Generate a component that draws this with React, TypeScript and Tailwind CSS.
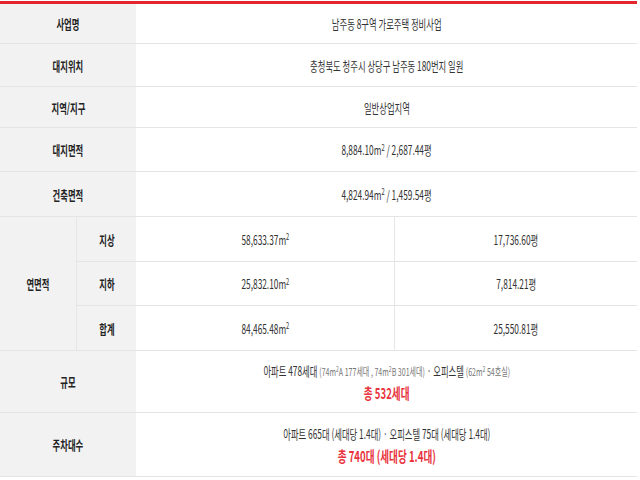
import React from 'react';

const font = { fontFamily: '"Noto Sans CJK KR", "Noto Sans", sans-serif' };

function T({ children, className = '' }: { children: React.ReactNode; className?: string }) {
  return (
    <span className={`inline-block origin-center scale-x-[0.64] whitespace-nowrap ${className}`}>
      {children}
    </span>
  );
}

function M2() {
  return (
    <>
      m<sup className="text-[9px]">2</sup>
    </>
  );
}

type RowProps = { label: string; h: string; children: React.ReactNode };

function Row({ label, h, children }: RowProps) {
  return (
    <div className={`flex border-b border-[#e4e4e4] ${h}`}>
      <div className="flex w-[136px] shrink-0 items-center justify-center bg-[#f2f2f2] text-[13px] font-bold text-[#222]">
        <T>{label}</T>
      </div>
      <div className="flex flex-1 flex-col items-center justify-center text-[13px] text-[#333]">
        {children}
      </div>
    </div>
  );
}

const subRows = [
  { label: '지상', m2: '58,633.37', py: '17,736.60', h: 'h-[45px]' },
  { label: '지하', m2: '25,832.10', py: '7,814.21', h: 'h-[44px]' },
  { label: '합계', m2: '84,465.48', py: '25,550.81', h: 'h-[45px]' },
];

export default function App() {
  return (
    <div className="h-[480px] w-[640px] bg-white pt-px leading-none" style={font}>
      <div className="w-[637px] border-t-[3px] border-[#e3262e]">
        <Row label="사업명" h="h-[40px]">
          <T>남주동 8구역 가로주택 정비사업</T>
        </Row>
        <Row label="대지위치" h="h-[43px]">
          <T>충청북도 청주시 상당구 남주동 180번지 일원</T>
        </Row>
        <Row label="지역/지구" h="h-[41px]">
          <T>일반상업지역</T>
        </Row>
        <Row label="대지면적" h="h-[44px]">
          <T>
            8,884.10<M2 /> / 2,687.44평
          </T>
        </Row>
        <Row label="건축면적" h="h-[45px]">
          <T>
            4,824.94<M2 /> / 1,459.54평
          </T>
        </Row>

        <div className="flex">
          <div className="flex w-[76px] shrink-0 items-center justify-center border-b border-[#e4e4e4] bg-[#f2f2f2] text-[13px] font-bold text-[#222]">
            <T>연면적</T>
          </div>
          <div className="flex flex-1 flex-col">
            {subRows.map((r) => (
              <div key={r.label} className={`flex border-b border-[#e4e4e4] ${r.h}`}>
                <div className="flex w-[60px] shrink-0 items-center justify-center border-l border-[#e6e6e6] bg-[#f2f2f2] text-[13px] font-bold text-[#222]">
                  <T>{r.label}</T>
                </div>
                <div className="flex w-[259px] shrink-0 items-center justify-center border-r border-[#e6e6e6] text-[13px] text-[#333]">
                  <T>
                    {r.m2}
                    <M2 />
                  </T>
                </div>
                <div className="flex flex-1 items-center justify-center text-[13px] text-[#333]">
                  <T>{r.py}평</T>
                </div>
              </div>
            ))}
          </div>
        </div>

        <Row label="규모" h="h-[62px]">
          <T>
            아파트 478세대{' '}
            <span className="text-[11px] text-[#777]">
              (74m<sup className="text-[8px]">2</sup>A 177세대 , 74m<sup className="text-[8px]">2</sup>B 301세대)
            </span>{' '}
            · 오피스텔{' '}
            <span className="text-[11px] text-[#777]">
              (62m<sup className="text-[8px]">2</sup> 54호실)
            </span>
          </T>
          <T className="mt-[8px] text-[15px] font-bold text-[#e8333c]">총 532세대</T>
        </Row>
        <Row label="주차대수" h="h-[64px]">
          <T>아파트 665대 (세대당 1.4대) · 오피스텔 75대 (세대당 1.4대)</T>
          <T className="mt-[8px] text-[15px] font-bold text-[#e8333c]">총 740대 (세대당 1.4대)</T>
        </Row>
      </div>
    </div>
  );
}
